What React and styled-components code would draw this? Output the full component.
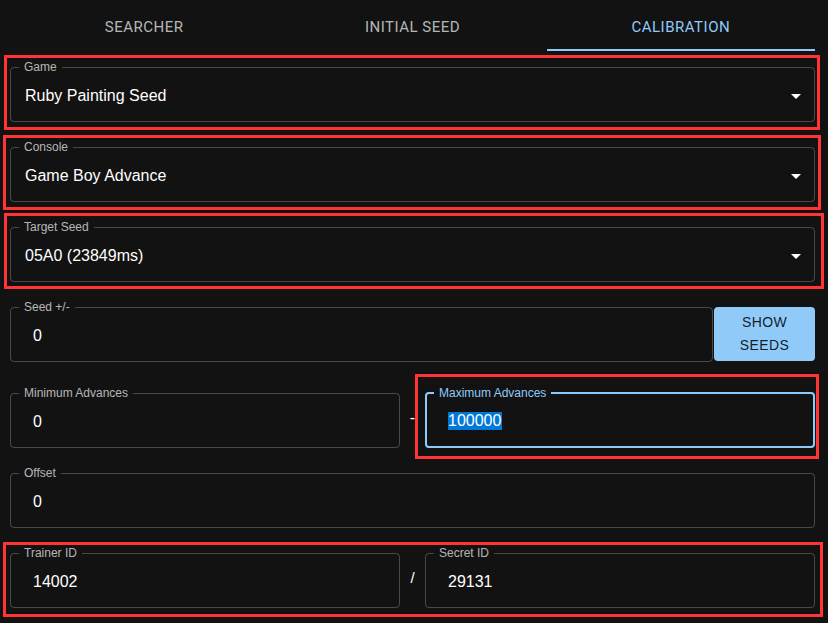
import React from "react";
import styled, { createGlobalStyle, css } from "styled-components";

const GlobalStyle = createGlobalStyle`
  html, body {
    margin: 0;
    background: #121212;
    color: #fff;
    font-family: "Liberation Sans", Arial, sans-serif;
  }
`;

const Page = styled.div`
  padding: 4px 13px 0 10px;
  min-height: 623px;
  box-sizing: border-box;
`;

const TabBar = styled.div`
  display: flex;
`;

const Tab = styled.div`
  flex: 1;
  height: 45px;
  display: flex;
  align-items: center;
  justify-content: center;
  font-family: Roboto, sans-serif;
  font-weight: 400;
  font-size: 15px;
  letter-spacing: 0.5px;
  text-transform: uppercase;
  color: ${(p) => (p.$active ? "#90caf9" : "rgba(255, 255, 255, 0.7)")};
  border-bottom: 2px solid ${(p) => (p.$active ? "#90caf9" : "transparent")};
`;

const Form = styled.div`
  display: flex;
  flex-direction: column;
  gap: 19px;
  margin-top: 10px;
`;

// red annotation boxes drawn over some fields
const Marked = styled.div`
  position: relative;
  &::after {
    content: "";
    position: absolute;
    pointer-events: none;
    top: ${(p) => p.$t}px;
    right: ${(p) => p.$r}px;
    height: calc(100% + ${(p) => -p.$t - p.$b}px);
    left: ${(p) => p.$l}px;
    box-sizing: border-box;
    border: 3px solid #ff3535;
  }
`;

const Fieldset = styled.fieldset`
  margin: 0;
  min-width: 0;
  padding: 0 8px;
  border: 1px solid rgba(255, 255, 255, 0.23);
  border-radius: 4px;
  ${(p) =>
    p.$focused &&
    css`
      border: 2px solid #90caf9;
      padding: 0 7px;
    `}
`;

const Legend = styled.legend`
  padding: 0 5px;
  font-size: 12px;
  line-height: 12px;
  color: ${(p) => (p.$focused ? "#90caf9" : "rgba(255, 255, 255, 0.7)")};
`;

const Value = styled.div`
  height: ${(p) => (p.$focused ? 44 : 45)}px;
  padding: 0 0 3px ${(p) => (p.$select ? 6 : 14)}px;
  display: flex;
  align-items: center;
  font-size: 16px;
  color: #fff;
`;

const Text = styled.span`
  flex: 1;
`;

const Selected = styled.span`
  background: #0078d7;
  color: #fff;
  padding: 0 1px 1px 0;
`;

const Arrow = styled.svg`
  width: 24px;
  height: 24px;
  margin-right: -2px;
  fill: #fff;
`;

const SeedRow = styled.div`
  display: flex;
  align-items: flex-start;
  gap: 1px;
  margin-bottom: 6px;
  & > fieldset {
    flex: 1;
  }
`;

const ShowButton = styled.button`
  width: 101px;
  height: 54px;
  margin-top: 6px;
  padding: 0 16px;
  border: none;
  border-radius: 4px;
  background: #90caf9;
  color: rgba(0, 0, 0, 0.87);
  font-family: "Liberation Sans", Arial, sans-serif;
  font-size: 14px;
  font-weight: 500;
  letter-spacing: 0.4px;
  line-height: 23px;
  text-transform: uppercase;
`;

const PairRow = styled.div`
  display: grid;
  grid-template-columns: 1fr 25px 1fr;
  align-items: start;
`;

const Separator = styled.div`
  display: flex;
  align-items: center;
  justify-content: center;
  height: 61px;
  box-sizing: border-box;
  padding: 12px 0 12px;
  font-size: ${(p) => p.$size || 16}px;
  color: #fff;
`;

function Field({ label, value, select, focused }) {
  return (
    <Fieldset $focused={focused}>
      <Legend $focused={focused}>{label}</Legend>
      <Value $select={select} $focused={focused}>
        <Text>{focused ? <Selected>{value}</Selected> : value}</Text>
        {select && (
          <Arrow viewBox="0 0 24 24">
            <path d="M7 10l5 5 5-5z" />
          </Arrow>
        )}
      </Value>
    </Fieldset>
  );
}

export default function App() {
  return (
    <Page>
      <GlobalStyle />
      <TabBar>
        <Tab>Searcher</Tab>
        <Tab>Initial Seed</Tab>
        <Tab $active>Calibration</Tab>
      </TabBar>
      <Form>
        <Marked $t={-6} $r={-5} $b={-8} $l={-6}>
          <Field label="Game" value="Ruby Painting Seed" select />
        </Marked>
        <Marked $t={-6} $r={-6} $b={-8} $l={-7}>
          <Field label="Console" value="Game Boy Advance" select />
        </Marked>
        <Marked $t={-8} $r={-9} $b={-7} $l={-6}>
          <Field label="Target Seed" value="05A0 (23849ms)" select />
        </Marked>
        <SeedRow>
          <Field label="Seed +/-" value="0" />
          <ShowButton>Show Seeds</ShowButton>
        </SeedRow>
        <PairRow>
          <Field label="Minimum Advances" value="0" />
          <Separator>-</Separator>
          <Marked $t={-13} $r={-4} $b={-11} $l={-10}>
            <Field label="Maximum Advances" value="100000" focused />
          </Marked>
        </PairRow>
        <Field label="Offset" value="0" />
        <Marked $t={-5} $r={-8} $b={-9} $l={-7}>
          <PairRow>
            <Field label="Trainer ID" value="14002" />
            <Separator $size={15}>/</Separator>
            <Field label="Secret ID" value="29131" />
          </PairRow>
        </Marked>
      </Form>
    </Page>
  );
}
